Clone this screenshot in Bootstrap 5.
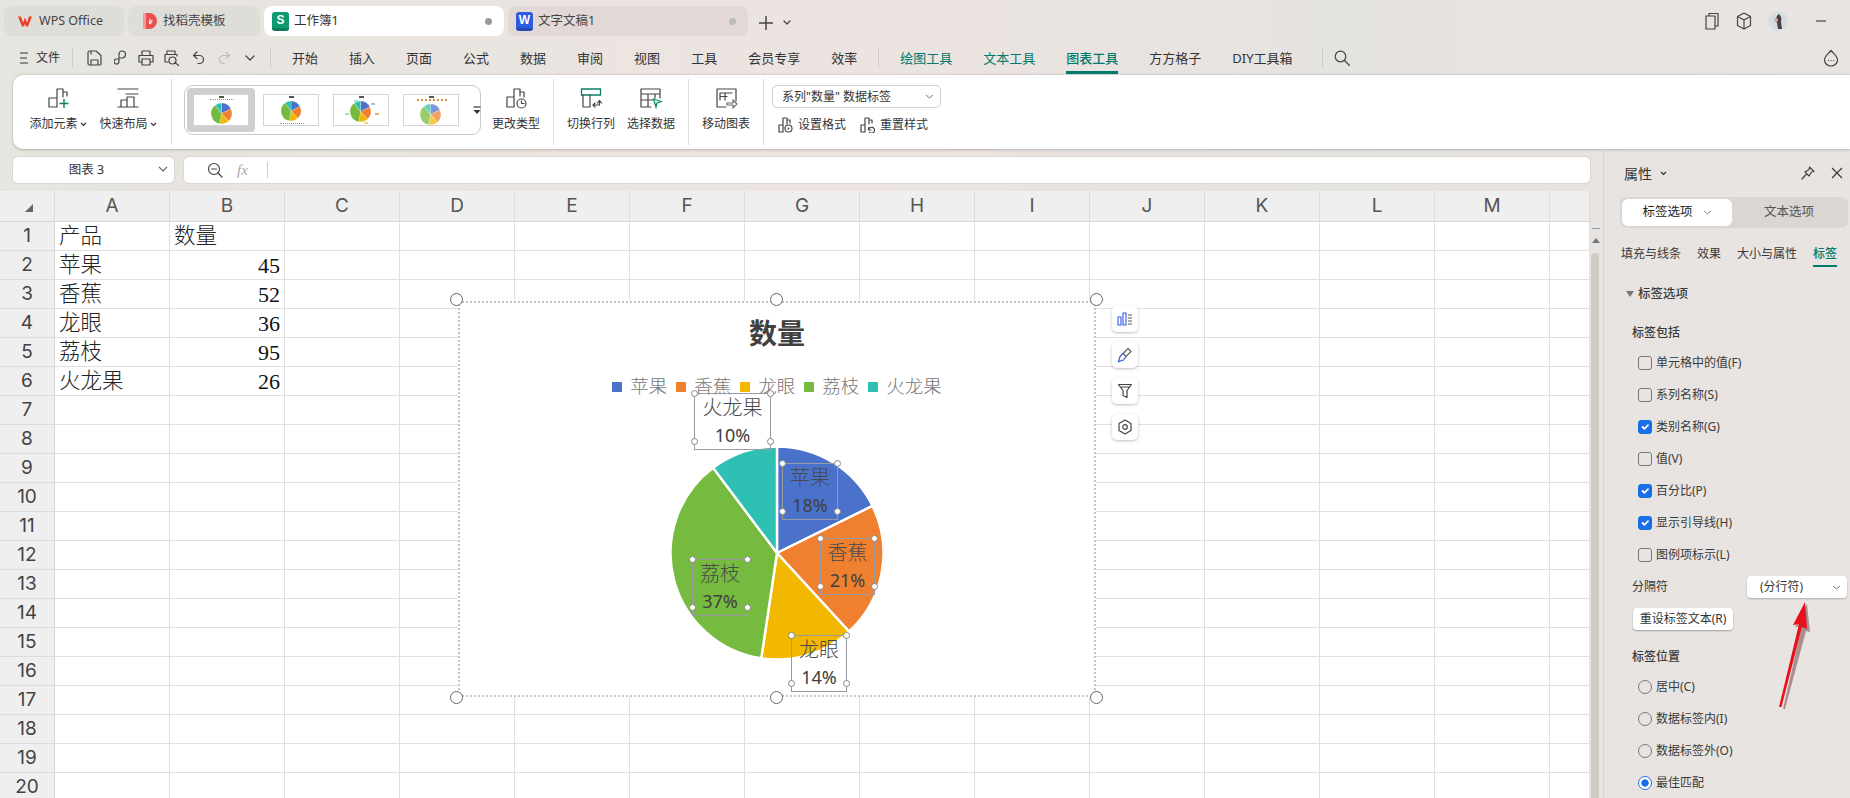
<!DOCTYPE html>
<html lang="zh-CN">
<head>
<meta charset="utf-8">
<title>工作簿1</title>
<link href="https://cdn.jsdelivr.net/npm/bootstrap@5.3.0/dist/css/bootstrap.min.css" rel="stylesheet">
<style>
html,body{width:1850px;height:798px;overflow:hidden}
body{position:relative;font-family:"Noto Sans","Noto Sans CJK SC",sans-serif;font-size:12px;color:#333;background:linear-gradient(90deg,#e6e5df 0%,#ede4e1 45%,#e5e3e0 72%,#e9e4e1 100%)}
svg{display:block;flex:none}
.ic{fill:none;stroke:#444;stroke-width:1.2;stroke-linejoin:round;stroke-linecap:round}
.titlebar{height:40px;padding:6px 0 0 4px}
.wtab{height:30px;border-radius:8px;background:#dfddd8;font-size:12.5px;color:#444;padding-left:13px;gap:6px}
.w120{width:120px}.w132{width:132px;padding-left:15px}.w240{width:240px;padding-left:8px;gap:5px}
.wtab.on{background:#fff;color:#333}
.wtab.dim{background:#e2d9d6;color:#444}
.dotx{width:7px;height:7px;border-radius:50%;background:#999;margin-right:12px}
.dim .dotx{background:#bbb}
.appico{width:17px;height:19px;border-radius:3px;color:#fff;font:700 12px/19px "Liberation Sans",sans-serif;text-align:center}
.appico.gr{background:#0e9a70;border-bottom:3px solid #0a7a58;line-height:16px}
.appico.bl{background:#2f5be0;border-bottom:3px solid #2348b8;line-height:16px}
.tabplus{margin-left:11px;gap:10px}
.winbtns{margin-left:auto;padding-right:24px;padding-bottom:4px;gap:16px}
.minbtn{margin-left:12px}
.avatar{width:20px;height:20px;border-radius:50%;background:#d5dde0;overflow:hidden}
.menubar{height:35px;padding-left:20px;font-size:13px}
.menu-file{font-size:12px;margin-left:8px;margin-right:12px}
.vsep{width:1px;height:20px;background:#cfcdc9}
.qa{width:26px;display:flex;justify-content:center}
.qa-wrap{margin-left:7px;margin-right:7px}
.mi-wrap{gap:31px}
.ml14{margin-left:14px}
.mi{position:relative;line-height:24px;white-space:nowrap;color:#333}
.mi.tool{color:#007a6c}
.mi.act::after{content:"";position:absolute;left:0;right:0;bottom:-4px;height:3px;background:#007a6c}
.mi.act{font-weight:500}
.sep-a{margin-left:21px;margin-right:21px}
.sep-b{margin-left:29px;margin-right:11px}
.chat{margin-left:auto;margin-right:11px}
.ribbon{height:74px;margin-left:13px;background:#fff;border-radius:10px 0 0 10px;box-shadow:0 1px 3px rgba(0,0,0,.22),0 -1px 2px rgba(0,0,0,.08)}
.pad15{padding-left:15px}
.rb{width:60px;padding-top:11px;color:#333;white-space:nowrap;font-size:12px}
.rb .lab{margin-top:5px;line-height:18px;display:flex;align-items:center;gap:2px}
.rg{gap:10px}
.rsep{width:1px;height:66px;background:#dcdcdc;align-self:center}
.m13{margin-left:13px}.m7{margin-left:7px}.m12{margin-left:12px}.m5{margin-left:5px}.m8{margin-left:8px}.g0{gap:0}
.gallery{width:297px;height:50px;margin-top:10px;border:1px solid #c9c9c9;border-radius:9px;padding:2px;gap:2px}
.gwrap{width:68px;height:44px;border-radius:4px;padding:6px;flex:none}
.gwrap.sel{background:#cfcfcf}
.thumb{position:relative;width:56px;height:32px;background:#fff;border:1px solid #d4d4d4}
.thumb svg{position:absolute}
.gmore{width:14px;margin-left:3px}
.ppos1{left:17px;top:8px}
.ppos2{left:17px;top:6px}
.ppos3{left:16px;top:6px}
.ppos4{left:16px;top:9px}
.ttl{position:absolute;left:25px;top:1px;width:5px;height:2px;background:#555}
.lgd{position:absolute;left:16px;width:24px;height:1px;border-top:1px dotted #999}
.ltop{top:4px}.lbot{bottom:1px}
.lcol{border-top:2px dotted #d09040;left:13px;width:30px}
.tk{position:absolute;width:4px;height:2px}
.tk1{left:37px;top:8px;background:#a9bde8}.tk2{left:41px;top:18px;background:#f2a878}.tk3{left:11px;top:18px;background:#b5dc98}.tk4{left:30px;top:27px;background:#f6d872}.tk5{left:20px;top:5px;background:#9fe0da}
.ribsel{width:169px;height:23px;margin-top:10px;border:1px solid #cfcfcf;border-radius:5px;padding:0 6px 0 9px;font-size:12px;color:#333}
.lastg{width:180px}
.rlink{gap:5px;white-space:nowrap}
.rlinks{margin-top:8px;margin-left:6px;gap:14px;height:18px}
.main{height:649px}
.leftcol{width:1603px}
.fbar{height:42px;padding:8px 0 8px 13px;gap:10px}
.namebox,.fxbox{height:26px;background:#fff;border-radius:5px;box-shadow:0 0 0 1px #dbd8d4}
.namebox{width:161px;font-size:12.5px;position:relative;padding-right:14px}
.namebox svg{position:absolute;right:6px;top:9px}
.fxbox{width:1406px;padding-left:23px;gap:14px}
.fxt{font:italic 15px "Liberation Serif",serif;color:#aaa;width:16px}
.fxs{width:1px;height:16px;background:#ccc}
.sheetrow{height:607px}
.sheetwrap{position:relative;width:1590px;height:607px;overflow:hidden;background:#fff}
.sheet{table-layout:fixed;border-collapse:separate;border-spacing:0;width:1590px}
.sheet tr{height:29px}
.sheet th,.sheet td{box-sizing:border-box;border-right:1px solid #e0e0e0;border-bottom:1px solid #e0e0e0;height:29px;max-height:29px;padding:0;overflow:hidden;white-space:nowrap}
.sheet td{font:300 21.5px/28px "Liberation Serif","Noto Sans CJK SC",serif;color:#222;padding:0 4px}
.sheet td.num{text-align:right;font-size:22px;color:#111;padding-top:1px;line-height:26px}
.sheet thead tr{height:31px}
.sheet thead th{height:31px;background:#efefef;font:400 19px/30px Inter,sans-serif;color:#555;text-align:center;border-right-color:#dcdcdc;border-bottom-color:#d6d6d6}
.sheet tbody th{background:#efefef;font:400 19px/28px Inter,sans-serif;color:#444;text-align:center;border-right-color:#d6d6d6;border-bottom-color:#dcdcdc}
.corner{border-left:8px solid transparent;border-bottom:8px solid #666;width:0;height:0;margin:4px 0 0 25px}
.vbar{width:13px;height:607px;position:relative}
.vbar-tick{position:absolute;left:2px;top:37px;width:8px;height:1px;background:#999}
.vbar-up{position:absolute;left:2px;top:47px;border-left:4px solid transparent;border-right:4px solid transparent;border-bottom:5px solid #777}
.vbar-thumb{position:absolute;left:1px;top:62px;width:8px;bottom:0;border-radius:4px 4px 0 0;background:#cfccc8}
.panel{width:247px;border-left:1px solid #d5d2cf;overflow:hidden;color:#3a3a3a;font-size:12px}
.phead{height:48px;padding:0 7px 0 20px}
.phead b{font-weight:400;font-size:14px;color:#333}
.seg{width:228px;height:31px;margin-left:16px;background:#d9d6d3;border-radius:7px;padding:2px}
.seg1{width:110px;height:27px;background:#fff;border-radius:6px;gap:10px;font-size:12.5px;color:#222}
.seg2{flex:1;font-size:12.5px;color:#555}
.ptabs{margin:14px 0 0 17px;gap:16px;height:25px}
.ptabs span{line-height:23px;white-space:nowrap}
.ptabs .on{color:#007a6c;border-bottom:2px solid #007a6c;font-weight:500}
.psec{margin:17px 0 0 22px;height:20px;gap:4px;font-weight:500;font-size:12.5px}
.tri{border-left:4px solid transparent;border-right:4px solid transparent;border-top:6px solid #777}
.psub{margin:19px 0 0 28px;height:20px;line-height:20px;font-weight:500}
.psub.s2{margin-top:17px}
.opts{margin:4px 0 0 34px}
.opt{height:32px;gap:4px;margin:0;white-space:nowrap}
.opt .form-check-input{width:14px;height:14px;margin:0;flex:none;border-color:#777;background-color:transparent;border-radius:3px}
.opt .form-check-input:checked{background-color:#1a6fe8;border-color:#1a6fe8}
.opt .form-check-input[type=radio]{border-radius:50%}
.opt .form-check-input[type=radio]:checked{background-color:#fff;border-color:#1a6fe8;background-image:radial-gradient(circle,#1a6fe8 0,#1a6fe8 3.4px,#fff 3.9px)}
.sepr{margin:5px 3px 0 28px;height:22px}
.psel{margin-left:auto;width:100px;height:22px;background:#fff;border-radius:4px;box-shadow:0 1px 2px rgba(0,0,0,.25);padding:0 6px 0 13px}
.pbtn{margin:10px 0 0 29px;width:100px;height:22px;background:#fff;border-radius:4px;box-shadow:0 1px 2px rgba(0,0,0,.3);font-size:12px;color:#333}
.chart{position:absolute;left:458px;top:110px;width:638px;height:396px;background:#fff;outline:2px dotted #c4c4c4;outline-offset:-2px}
.ctitle{margin-top:16px;font:700 28px/36px "Liberation Serif","Noto Sans CJK SC",serif;color:#404040;text-align:center}
.clegend{margin-top:22px;height:24px;gap:9px;font:300 18.5px/24px "Liberation Serif","Noto Sans CJK SC",serif;color:#777}
.clegend span{display:flex;align-items:center;gap:8px}
.clegend i{width:10px;height:10px;display:block}
.bg-c1{background:#4a72cb}.bg-c2{background:#ef8030}.bg-c3{background:#f2b800}.bg-c4{background:#76bb40}.bg-c5{background:#2fc0b4}
.piepos{position:absolute;left:211.5px;top:144.5px}
.hd{position:absolute;width:13px;height:13px;border-radius:50%;background:#fff;border:1.3px solid #666;z-index:3}
.tl{left:-8.5px;top:-8px}.tm{left:312px;top:-8px}.tr{right:-7px;top:-8px}
.bl{left:-8.5px;bottom:-6.5px}.bm{left:312px;bottom:-6.5px}.brr{right:-7px;bottom:-6.5px}
.dl{position:absolute;border:1px solid #9a9aa2;font:300 20px/27px "Liberation Serif","Noto Sans CJK SC",serif;color:#4a4a4a;text-align:center;display:flex;flex-direction:column;justify-content:center;z-index:2}
.dl small{font:18px/27px "Noto Sans",sans-serif;display:block;color:#404040}
.dl-a{left:324px;top:162px;width:56px;height:57px}
.dl-b{left:362px;top:237px;width:55px;height:57px}
.dl-c{left:333px;top:334px;width:56px;height:57px}
.dl-d{left:234px;top:258px;width:56px;height:57px}
.dl-e{left:236px;top:92px;width:77px;height:57px}
.hs{position:absolute;width:7px;height:7px;border-radius:50%;background:#fff;border:1px solid #888}
.h1{left:-4px;top:-4px}.h2{right:-4px;top:-4px}.h3{left:-4px;bottom:-4px}.h4{right:-4px;bottom:-4px}
.sidebtns{position:absolute;left:1112px;top:115px;gap:10px}
.sb{width:26px;height:26px;background:#fff;border-radius:5px;box-shadow:0 1px 3px rgba(0,0,0,.25)}
.redarrow{position:absolute;left:1770px;top:595px;z-index:9}
</style>
</head>
<body>
<svg width="0" height="0" class="position-absolute">
<symbol id="pie" viewBox="-106 -106 212 212">
<g stroke="#fff" stroke-width="2.4">
<path fill="#4a72cb" d="M0 0V-105.5A105.5 105.5 0 0 1 94.6 -46.6Z"/>
<path fill="#ef8030" d="M0 0L94.6 -46.6A105.5 105.5 0 0 1 71.3 77.8Z"/>
<path fill="#f2b800" d="M0 0L71.3 77.8A105.5 105.5 0 0 1 -15.6 104.3Z"/>
<path fill="#76bb40" d="M0 0L-15.6 104.3A105.5 105.5 0 0 1 -63.3 -84.4Z"/>
<path fill="#2fc0b4" d="M0 0L-63.3 -84.4A105.5 105.5 0 0 1 0 -105.5Z"/>
</g>
</symbol>
</svg>

<div class="titlebar d-flex align-items-start">
  <div class="d-flex gap-1">
    <div class="wtab w120 d-flex align-items-center">
      <svg width="16" height="14" viewBox="0 0 16 14"><path d="M1 2.500h3l2 6 2-5 2 5 2-6h3l-4 10h-2l-1-3-1 3H5z" fill="#ea3f28"/></svg>
      <span>WPS Office</span>
    </div>
    <div class="wtab w132 d-flex align-items-center">
      <svg width="14" height="16" viewBox="0 0 14 16"><path d="M0 0h4v16H0z" fill="#f29a9a"/><path d="M3 0h3a8 8 0 0 1 0 16H3z" fill="#e94f4f"/><path d="M7 11c-1-2 0-3 0-5M7 11c1-1 2-2 2-4" stroke="#fff" stroke-width="1.2" fill="none"/></svg>
      <span>找稻壳模板</span>
    </div>
    <div class="wtab w240 on d-flex align-items-center">
      <div class="appico gr">S</div><span class="flex-grow-1">工作簿1</span><i class="dotx"></i>
    </div>
    <div class="wtab w240 dim d-flex align-items-center">
      <div class="appico bl">W</div><span class="flex-grow-1">文字文稿1</span><i class="dotx"></i>
    </div>
  </div>
  <div class="tabplus d-flex align-items-center h-100">
    <svg width="14" height="14" viewBox="0 0 14 14"><path d="M7 0v14M0 7h14" stroke="#444" stroke-width="1.5"/></svg>
    <svg width="8" height="6" viewBox="0 0 8 6"><path class="ic" d="M1 1l3 3 3-3"/></svg>
  </div>
  <div class="winbtns d-flex align-items-center h-100">
    <svg width="16" height="18" viewBox="0 0 16 18"><path class="ic" d="M2 4h9v13H2zM5 4V1.500h9V14h-3"/></svg>
    <svg width="16" height="18" viewBox="0 0 16 18"><path class="ic" d="M8 1l6.500 3.500v9L8 17l-6.500-3.500v-9zM1.500 4.500L8 8l6.500-3.500M8 8v9"/></svg>
    <div class="avatar"><svg width="20" height="20" viewBox="0 0 20 20"><path d="M11 3c-3 2-4 6-2 9l1 6h4l-1-7c1-3 0-6-2-8z" fill="#4a4045"/><circle cx="8" cy="9" r="2" fill="#d8a8a8"/></svg></div>
    <svg class="minbtn" width="10" height="2" viewBox="0 0 10 2"><path d="M0 1h10" stroke="#444" stroke-width="1.2"/></svg>
  </div>
</div>

<div class="menubar d-flex align-items-center">
  <svg width="8" height="12" viewBox="0 0 8 12"><path d="M0 1h8M0 6h7M0 11h8" stroke="#333" stroke-width="1.2"/></svg>
  <span class="menu-file">文件</span>
  <div class="vsep"></div>
  <div class="d-flex align-items-center ms-2">
    <div class="qa"><svg width="15" height="16" viewBox="0 0 15 16"><path class="ic" d="M1 2.500a1.500 1.500 0 0 1 1.500-1.500H9l5 4.500V13.500a1.500 1.500 0 0 1-1.500 1.500h-10A1.500 1.500 0 0 1 1 13.500zM4 15v-5h7v5M4 1v3"/></svg></div>
    <div class="qa"><svg width="13" height="16" viewBox="0 0 13 16"><path class="ic" d="M5 8V4a3 3 0 0 1 3-3 3.500 3.500 0 0 1 0 7H6M5 8v3.500a2.500 2.500 0 0 1-5 0A2.500 2.500 0 0 1 2.500 9H4"/></svg></div>
    <div class="qa"><svg width="16" height="16" viewBox="0 0 16 16"><path class="ic" d="M4 5V1h8v4M4 12H1V5.500h14V12h-3M4 9h8v6H4z"/></svg></div>
    <div class="qa"><svg width="16" height="16" viewBox="0 0 16 16"><path class="ic" d="M3 4V1h8v3M4 12H1V4.500h12V6M8.500 7a3.500 3.500 0 1 1 0 7 3.500 3.500 0 0 1 0-7zM11 12.500l3.500 3"/></svg></div>
    <div class="qa"><svg width="13" height="14" viewBox="0 0 13 14"><path class="ic" d="M5 1L1.500 4.500 5 7.500M2 4.500h5.500a4 4 0 0 1 0 8H6"/></svg></div>
    <div class="qa"><svg width="13" height="14" viewBox="0 0 13 14"><path d="M8 1l3.500 3.500L8 7.500M11 4.500H5.500a4 4 0 0 0 0 8H7" fill="none" stroke="#bbb" stroke-width="1.200"/></svg></div>
    <div class="qa"><svg width="10" height="6" viewBox="0 0 10 6"><path class="ic" d="M1 1l4 4 4-4"/></svg></div>
  </div>
  <div class="vsep qa-wrap"></div>
  <div class="d-flex align-items-center mi-wrap ml14">
    <span class="mi">开始</span><span class="mi">插入</span><span class="mi">页面</span><span class="mi">公式</span><span class="mi">数据</span><span class="mi">审阅</span><span class="mi">视图</span><span class="mi">工具</span><span class="mi">会员专享</span><span class="mi">效率</span>
  </div>
  <div class="vsep sep-a"></div>
  <div class="d-flex align-items-center mi-wrap">
    <span class="mi tool">绘图工具</span><span class="mi tool">文本工具</span><span class="mi tool act">图表工具</span><span class="mi">方方格子</span><span class="mi">DIY工具箱</span>
  </div>
  <div class="vsep sep-b"></div>
  <svg width="16" height="16" viewBox="0 0 16 16"><circle cx="6.500" cy="6.500" r="5.300" class="ic"/><path class="ic" d="M10.500 10.500l5 5"/></svg>
  <svg class="chat" width="16" height="18" viewBox="0 0 16 18"><path class="ic" d="M8 1.500C5 5 1.500 7 1.500 11a6.500 6 0 0 0 13 0C14.500 7 11 5 8 1.500z"/><path d="M5 11.500h1M7.500 11.500h1M10 11.500h1" stroke="#444" stroke-width="1.200"/></svg>
</div>

<div class="ribbon d-flex pad15">
  <div class="d-flex rg">
    <div class="rb d-flex flex-column align-items-center">
      <svg width="24" height="24" viewBox="0 0 24 24"><path class="ic" d="M3 21V12h8v9zM11 12V3h6v8M17 6h4v4"/><path d="M18 13v9M13.500 17.500h9" stroke="#0b7f6a" stroke-width="1.400"/></svg>
      <div class="lab">添加元素<svg width="7" height="5" viewBox="0 0 7 5"><path d="M1 1l2.500 2.500L6 1" fill="none" stroke="#333" stroke-width="1.200"/></svg></div>
    </div>
    <div class="rb d-flex flex-column align-items-center">
      <svg width="24" height="24" viewBox="0 0 24 24"><path class="ic" d="M2 3h20M10 8h12M2 21h20M5 21v-7h6v7M11 14v-3h7v10"/></svg>
      <div class="lab">快速布局<svg width="7" height="5" viewBox="0 0 7 5"><path d="M1 1l2.500 2.500L6 1" fill="none" stroke="#333" stroke-width="1.200"/></svg></div>
    </div>
  </div>
  <div class="rsep m13"></div>
  <div class="gallery d-flex align-items-center m12">
    <div class="gwrap sel"><div class="thumb"><i class="ttl"></i><i class="lgd ltop"></i><svg class="ppos1" width="21" height="21"><use href="#pie"/></svg></div></div>
    <div class="gwrap"><div class="thumb"><i class="ttl"></i><i class="lgd lbot"></i><svg class="ppos2" width="20" height="20"><use href="#pie"/></svg></div></div>
    <div class="gwrap"><div class="thumb"><i class="ttl"></i><svg class="ppos3" width="21" height="21"><use href="#pie"/></svg><i class="tk tk1"></i><i class="tk tk2"></i><i class="tk tk3"></i><i class="tk tk4"></i><i class="tk tk5"></i></div></div>
    <div class="gwrap"><div class="thumb"><i class="ttl"></i><i class="lgd ltop lcol"></i><svg class="ppos4" width="21" height="21"><use href="#pie" opacity=".75"/></svg></div></div>
    <svg class="gmore" width="9" height="9" viewBox="0 0 9 9"><path d="M1 1h7" stroke="#333" stroke-width="1.200"/><path d="M1 4l3.500 4L8 4z" fill="#333"/></svg>
  </div>
  <div class="rb d-flex flex-column align-items-center m5">
    <svg width="24" height="24" viewBox="0 0 24 24"><path class="ic" d="M3 21V11h7v10zM10 11V3h6v7M16 6h4v5"/><circle class="ic" cx="17.500" cy="17.500" r="4.500"/><path class="ic" d="M17.500 15v2.500h2.500"/></svg>
    <div class="lab">更改类型</div>
  </div>
  <div class="rsep m7"></div>
  <div class="d-flex g0 m7">
    <div class="rb d-flex flex-column align-items-center">
      <svg width="24" height="24" viewBox="0 0 24 24"><path d="M2.500 3h19v6h-19z" fill="none" stroke="#0b7f6a" stroke-width="1.300"/><path class="ic" d="M4 9v12h7V9M14 19h6.500v-4M18.500 17l2-2.500 2 2.500M14 19l2-2M14 19l2 2"/></svg>
      <div class="lab">切换行列</div>
    </div>
    <div class="rb d-flex flex-column align-items-center">
      <svg width="24" height="24" viewBox="0 0 24 24"><path class="ic" d="M2 3h19v9M2 3v18h10M2 8h19M2 14h12M9 8v13M16 8v4"/><path d="M14.500 13l7.500 2.500-4 1.500-1 4z" fill="#fff" stroke="#0b8f6e" stroke-width="1.300"/></svg>
      <div class="lab">选择数据</div>
    </div>
  </div>
  <div class="rsep m7"></div>
  <div class="rb d-flex flex-column align-items-center m7">
    <svg width="24" height="24" viewBox="0 0 24 24"><path class="ic" d="M12 21H3V3h19v12M6 14V7h12M6 10.500h7M11 7v7"/><path d="M13 17h6v-3l4 4-4 4v-3h-6z" fill="#fff" stroke="#666" stroke-width="1.100"/></svg>
    <div class="lab">移动图表</div>
  </div>
  <div class="rsep m7"></div>
  <div class="lastg d-flex flex-column m8">
    <div class="ribsel d-flex align-items-center justify-content-between">
      <span>系列"数量" 数据标签</span>
      <svg width="9" height="5" viewBox="0 0 9 5"><path d="M1 1l3.500 3L8 1" fill="none" stroke="#777"/></svg>
    </div>
    <div class="rlinks d-flex align-items-center">
      <div class="rlink d-flex align-items-center"><svg width="15" height="16" viewBox="0 0 15 16"><path class="ic" d="M1 15V8h4v7zM5 8V1h4v6M9 3h3v3"/><circle class="ic" cx="10.500" cy="11.500" r="3.500"/><circle cx="10.500" cy="11.500" r="1" fill="#444"/></svg>设置格式</div>
      <div class="rlink d-flex align-items-center"><svg width="15" height="16" viewBox="0 0 15 16"><path class="ic" d="M1 15V8h4v7zM5 8V1h4v6M9 3h3v3M8.500 13a3 3 0 1 1 1 2.500M8.500 10.500v2.500H11"/></svg>重置样式</div>
    </div>
  </div>
</div>

<div class="main d-flex">
  <div class="leftcol d-flex flex-column">
    <div class="fbar d-flex">
      <div class="namebox d-flex align-items-center justify-content-center">图表 3<svg width="10" height="6" viewBox="0 0 10 6"><path d="M1 1l4 4 4-4" fill="none" stroke="#666" stroke-width="1.100"/></svg></div>
      <div class="fxbox d-flex align-items-center">
        <svg width="16" height="16" viewBox="0 0 16 16"><circle class="ic" cx="7" cy="7" r="5.500"/><path class="ic" d="M4.500 7h5M11 11l4 4"/></svg>
        <span class="fxt">fx</span><i class="fxs"></i>
      </div>
    </div>
    <div class="sheetrow d-flex">
      <div class="sheetwrap">
        <table class="sheet">
          <colgroup><col width="55"><col width="115"><col width="115"><col width="115"><col width="115"><col width="115"><col width="115"><col width="115"><col width="115"><col width="115"><col width="115"><col width="115"><col width="115"><col width="115"><col width="40"></colgroup>
          <thead><tr><th><div class="corner"></div></th><th>A</th><th>B</th><th>C</th><th>D</th><th>E</th><th>F</th><th>G</th><th>H</th><th>I</th><th>J</th><th>K</th><th>L</th><th>M</th><th></th></tr></thead>
          <tbody>
            <tr><th>1</th><td>产品</td><td>数量</td><td></td><td></td><td></td><td></td><td></td><td></td><td></td><td></td><td></td><td></td><td></td><td></td></tr>
            <tr><th>2</th><td>苹果</td><td class="num">45</td><td></td><td></td><td></td><td></td><td></td><td></td><td></td><td></td><td></td><td></td><td></td><td></td></tr>
            <tr><th>3</th><td>香蕉</td><td class="num">52</td><td></td><td></td><td></td><td></td><td></td><td></td><td></td><td></td><td></td><td></td><td></td><td></td></tr>
            <tr><th>4</th><td>龙眼</td><td class="num">36</td><td></td><td></td><td></td><td></td><td></td><td></td><td></td><td></td><td></td><td></td><td></td><td></td></tr>
            <tr><th>5</th><td>荔枝</td><td class="num">95</td><td></td><td></td><td></td><td></td><td></td><td></td><td></td><td></td><td></td><td></td><td></td><td></td></tr>
            <tr><th>6</th><td>火龙果</td><td class="num">26</td><td></td><td></td><td></td><td></td><td></td><td></td><td></td><td></td><td></td><td></td><td></td><td></td></tr>
            <tr><th>7</th><td></td><td></td><td></td><td></td><td></td><td></td><td></td><td></td><td></td><td></td><td></td><td></td><td></td><td></td></tr>
            <tr><th>8</th><td></td><td></td><td></td><td></td><td></td><td></td><td></td><td></td><td></td><td></td><td></td><td></td><td></td><td></td></tr>
            <tr><th>9</th><td></td><td></td><td></td><td></td><td></td><td></td><td></td><td></td><td></td><td></td><td></td><td></td><td></td><td></td></tr>
            <tr><th>10</th><td></td><td></td><td></td><td></td><td></td><td></td><td></td><td></td><td></td><td></td><td></td><td></td><td></td><td></td></tr>
            <tr><th>11</th><td></td><td></td><td></td><td></td><td></td><td></td><td></td><td></td><td></td><td></td><td></td><td></td><td></td><td></td></tr>
            <tr><th>12</th><td></td><td></td><td></td><td></td><td></td><td></td><td></td><td></td><td></td><td></td><td></td><td></td><td></td><td></td></tr>
            <tr><th>13</th><td></td><td></td><td></td><td></td><td></td><td></td><td></td><td></td><td></td><td></td><td></td><td></td><td></td><td></td></tr>
            <tr><th>14</th><td></td><td></td><td></td><td></td><td></td><td></td><td></td><td></td><td></td><td></td><td></td><td></td><td></td><td></td></tr>
            <tr><th>15</th><td></td><td></td><td></td><td></td><td></td><td></td><td></td><td></td><td></td><td></td><td></td><td></td><td></td><td></td></tr>
            <tr><th>16</th><td></td><td></td><td></td><td></td><td></td><td></td><td></td><td></td><td></td><td></td><td></td><td></td><td></td><td></td></tr>
            <tr><th>17</th><td></td><td></td><td></td><td></td><td></td><td></td><td></td><td></td><td></td><td></td><td></td><td></td><td></td><td></td></tr>
            <tr><th>18</th><td></td><td></td><td></td><td></td><td></td><td></td><td></td><td></td><td></td><td></td><td></td><td></td><td></td><td></td></tr>
            <tr><th>19</th><td></td><td></td><td></td><td></td><td></td><td></td><td></td><td></td><td></td><td></td><td></td><td></td><td></td><td></td></tr>
            <tr><th>20</th><td></td><td></td><td></td><td></td><td></td><td></td><td></td><td></td><td></td><td></td><td></td><td></td><td></td><td></td></tr>
          </tbody>
        </table>

        <div class="chart">
          <i class="hd tl"></i><i class="hd tm"></i><i class="hd tr"></i><i class="hd bl"></i><i class="hd bm"></i><i class="hd brr"></i>
          <div class="ctitle">数量</div>
          <div class="clegend d-flex justify-content-center">
            <span><i class="bg-c1"></i>苹果</span><span><i class="bg-c2"></i>香蕉</span><span><i class="bg-c3"></i>龙眼</span><span><i class="bg-c4"></i>荔枝</span><span><i class="bg-c5"></i>火龙果</span>
          </div>
          <svg class="piepos" width="214" height="214"><use href="#pie"/></svg>
          <div class="dl dl-e"><i class="hs h1"></i><i class="hs h2"></i><i class="hs h3"></i><i class="hs h4"></i>火龙果<small>10%</small></div>
          <div class="dl dl-a"><i class="hs h1"></i><i class="hs h2"></i><i class="hs h3"></i><i class="hs h4"></i>苹果<small>18%</small></div>
          <div class="dl dl-b"><i class="hs h1"></i><i class="hs h2"></i><i class="hs h3"></i><i class="hs h4"></i>香蕉<small>21%</small></div>
          <div class="dl dl-c"><i class="hs h1"></i><i class="hs h2"></i><i class="hs h3"></i><i class="hs h4"></i>龙眼<small>14%</small></div>
          <div class="dl dl-d"><i class="hs h1"></i><i class="hs h2"></i><i class="hs h3"></i><i class="hs h4"></i>荔枝<small>37%</small></div>
        </div>

        <div class="sidebtns d-flex flex-column">
          <div class="sb d-flex align-items-center justify-content-center"><svg width="16" height="16" viewBox="0 0 16 16"><path d="M1 6h3v8H1zM6 2h3v12H6z" fill="none" stroke="#2f5be0" stroke-width="1.100"/><path d="M11 4h4M11 7h4M11 10h4M11 13h4" stroke="#555"/></svg></div>
          <div class="sb d-flex align-items-center justify-content-center"><svg width="16" height="16" viewBox="0 0 16 16"><path d="M11 1.500l3 3-5 5-3-3z" fill="none" stroke="#555" stroke-width="1.100"/><path d="M6 6.500l-3 3-1.500 5 5-1.500 2.500-3.500" fill="none" stroke="#2f5be0" stroke-width="1.200"/></svg></div>
          <div class="sb d-flex align-items-center justify-content-center"><svg width="16" height="16" viewBox="0 0 16 16"><path class="ic" d="M1.500 1.500h13L10 7.500v7l-4-2v-5zM3.500 4h9"/></svg></div>
          <div class="sb d-flex align-items-center justify-content-center"><svg width="16" height="16" viewBox="0 0 16 16"><path class="ic" d="M8 1l6 3.500v7L8 15l-6-3.500v-7z"/><circle class="ic" cx="8" cy="8" r="2.300"/></svg></div>
        </div>
      </div>
      <div class="vbar"><i class="vbar-tick"></i><i class="vbar-up"></i><i class="vbar-thumb"></i></div>
    </div>
  </div>

  <div class="panel flex-grow-1">
    <div class="phead d-flex align-items-center">
      <b>属性</b>
      <svg class="ms-2" width="7" height="5" viewBox="0 0 7 5"><path d="M1 1l2.500 2.500L6 1" fill="none" stroke="#333" stroke-width="1.200"/></svg>
      <svg class="ms-auto me-3" width="14" height="14" viewBox="0 0 14 14"><path class="ic" d="M8.500 1L13 5.500 10.500 6 8 10 4 6 8 3.500zM5.500 8L1 13"/></svg>
      <svg width="12" height="12" viewBox="0 0 12 12"><path d="M1 1l10 10M11 1L1 11" stroke="#333" stroke-width="1.100"/></svg>
    </div>
    <div class="seg d-flex">
      <div class="seg1 d-flex align-items-center justify-content-center">标签选项<svg width="9" height="5" viewBox="0 0 9 5"><path d="M1 1l3.500 3L8 1" fill="none" stroke="#888"/></svg></div>
      <div class="seg2 d-flex align-items-center justify-content-center">文本选项</div>
    </div>
    <div class="ptabs d-flex align-items-start">
      <span>填充与线条</span><span>效果</span><span>大小与属性</span><span class="on">标签</span>
    </div>
    <div class="psec d-flex align-items-center"><i class="tri"></i>标签选项</div>
    <div class="psub">标签包括</div>
    <div class="opts">
      <label class="opt d-flex align-items-center"><input class="form-check-input" type="checkbox">单元格中的值(F)</label>
      <label class="opt d-flex align-items-center"><input class="form-check-input" type="checkbox">系列名称(S)</label>
      <label class="opt d-flex align-items-center"><input class="form-check-input" type="checkbox" checked>类别名称(G)</label>
      <label class="opt d-flex align-items-center"><input class="form-check-input" type="checkbox">值(V)</label>
      <label class="opt d-flex align-items-center"><input class="form-check-input" type="checkbox" checked>百分比(P)</label>
      <label class="opt d-flex align-items-center"><input class="form-check-input" type="checkbox" checked>显示引导线(H)</label>
      <label class="opt d-flex align-items-center"><input class="form-check-input" type="checkbox">图例项标示(L)</label>
    </div>
    <div class="sepr d-flex align-items-center">分隔符
      <div class="psel d-flex align-items-center justify-content-between">(分行符)<svg width="9" height="5" viewBox="0 0 9 5"><path d="M1 1l3.500 3L8 1" fill="none" stroke="#777"/></svg></div>
    </div>
    <button type="button" class="pbtn btn p-0 d-block border-0">重设标签文本(R)</button>
    <div class="psub s2">标签位置</div>
    <div class="opts">
      <label class="opt d-flex align-items-center"><input class="form-check-input" type="radio" name="lp">居中(C)</label>
      <label class="opt d-flex align-items-center"><input class="form-check-input" type="radio" name="lp">数据标签内(I)</label>
      <label class="opt d-flex align-items-center"><input class="form-check-input" type="radio" name="lp">数据标签外(O)</label>
      <label class="opt d-flex align-items-center"><input class="form-check-input" type="radio" name="lp" checked>最佳匹配</label>
    </div>
  </div>
</div>

<svg class="redarrow" width="50" height="120" viewBox="1770 595 50 120">
  <path d="M1807 604L1795 627 1802 626 1783 709 1785 709 1806 631 1810 632z" fill="#5a2a2a" opacity=".45"/>
  <path d="M1805 602L1793 625 1799 624 1779 707 1781.500 707 1802 627 1807 629z" fill="#e8101a"/>
</svg>

<script src="https://cdn.jsdelivr.net/npm/bootstrap@5.3.0/dist/js/bootstrap.bundle.min.js"></script>
</body>
</html>
